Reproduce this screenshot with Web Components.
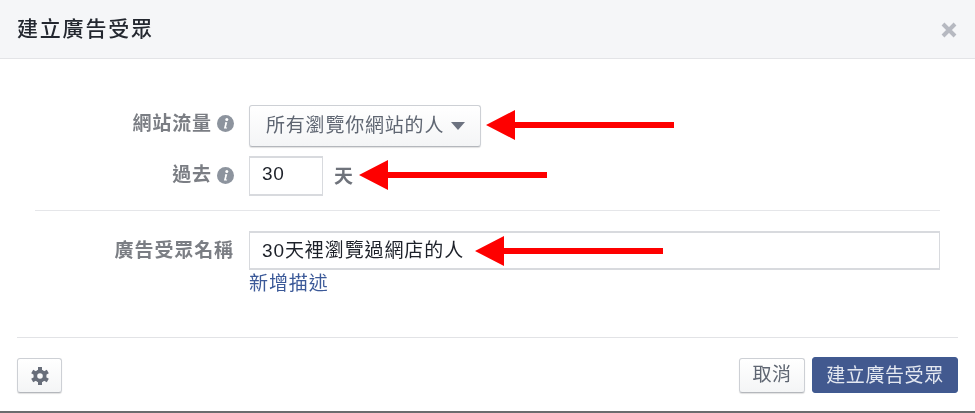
<!DOCTYPE html>
<html lang="zh-Hant">
<head>
<meta charset="utf-8">
<title>建立廣告受眾</title>
<style>
html, body { margin: 0; padding: 0; background: #fff; }
body { width: 975px; height: 413px; overflow: hidden; font-family: "Liberation Sans", "Noto Sans CJK TC", sans-serif; }
</style>
</head>
<body>
<fb-dialog>
  <fb-header slot="header">建立廣告受眾</fb-header>

  <fb-row label="網站流量" info lift="5">
    <fb-select>所有瀏覽你網站的人</fb-select>
  </fb-row>
  <fb-row label="過去" info lift="2">
    <fb-input width="74" height="40" spacing="0.6">30</fb-input>
    <fb-unit>天</fb-unit>
  </fb-row>
  <fb-divider></fb-divider>
  <fb-row label="廣告受眾名稱">
    <fb-input width="691" height="39" spacing="0.9">30天裡瀏覽過網店的人</fb-input>
  </fb-row>
  <fb-link>新增描述</fb-link>

  <fb-footer slot="footer"></fb-footer>

  <fb-arrow slot="overlay" tip="486" base="515" end="674" y="125"></fb-arrow>
  <fb-arrow slot="overlay" tip="359" base="388" end="547" y="175"></fb-arrow>
  <fb-arrow slot="overlay" tip="475" base="504" end="663" y="251"></fb-arrow>
</fb-dialog>

<script>
const CJK = `"Liberation Sans", "Noto Sans CJK TC", sans-serif`;

class FbDialog extends HTMLElement {
  constructor() {
    super();
    this.attachShadow({mode: "open"}).innerHTML = `
      <style>
        :host { display: flex; flex-direction: column; position: relative; width: 975px; height: 413px; box-sizing: border-box; border-bottom: 2px solid #6b6c6e; font-family: ${CJK}; background: #fff; filter: blur(.4px); }
        .body { flex: 1; padding-top: 46px; }
      </style>
      <slot name="header"></slot>
      <div class="body"><slot></slot></div>
      <slot name="footer"></slot>
      <slot name="overlay"></slot>`;
  }
}

class FbHeader extends HTMLElement {
  constructor() {
    super();
    this.attachShadow({mode: "open"}).innerHTML = `
      <style>
        :host { display: flex; align-items: center; justify-content: space-between; height: 58px; padding: 0 18px; background: #f5f6f8; border-bottom: 1px solid #e3e4e7; }
        .title { font-size: 21px; font-weight: 500; letter-spacing: 1.8px; color: #23272f; line-height: 60px; margin-left: -1px; }
        svg { display: block; margin-top: 2px; }
      </style>
      <span class="title"><slot></slot></span>
      <svg width="16" height="16" viewBox="0 0 16 16"><path d="M2 2 L14 14 M14 2 L2 14" stroke="#b6b9c1" stroke-width="4"/></svg>`;
  }
}

class FbRow extends HTMLElement {
  constructor() {
    super();
    const info = this.hasAttribute("info") ? `
      <svg width="17" height="17" viewBox="0 0 17 17">
        <circle cx="8.5" cy="8.5" r="8.5" fill="#8d949e"/>
        <circle cx="9.8" cy="4.4" r="1.5" fill="#fff"/>
        <path d="M8.1 7.2 H10.3 L8.9 12.4 H10.2 L9.9 13.6 H6.9 L8.2 8.4 H7.8 Z" fill="#fff"/>
      </svg>` : "";
    this.attachShadow({mode: "open"}).innerHTML = `
      <style>
        :host { display: grid; grid-template-columns: 234px 1fr; column-gap: 15px; align-items: center; margin-bottom: 9px; }
        .label { display: flex; justify-content: flex-end; align-items: center; gap: 5px; padding-bottom: ${this.getAttribute("lift") || 0}px; font-size: 19px; font-weight: 700; letter-spacing: 0.9px; color: #7b7e84; }
        .label span { padding-bottom: 5px; }
        .field { display: flex; align-items: center; }
      </style>
      <div class="label"><span>${this.getAttribute("label")}</span>${info}</div>
      <div class="field"><slot></slot></div>`;
  }
}

class FbSelect extends HTMLElement {
  constructor() {
    super();
    this.attachShadow({mode: "open"}).innerHTML = `
      <style>
        :host { display: flex; align-items: center; box-sizing: border-box; width: 232px; height: 42px; padding-left: 16px; border: 1px solid #cdd0d5; border-bottom-color: #b4b7bc; border-radius: 3px; background: linear-gradient(#fff, #f4f5f6); box-shadow: 0 1px 1px rgba(0,0,0,.12); font-size: 19px; letter-spacing: 0.8px; color: #5f6672; }
        span { padding-bottom: 6px; }
        i { width: 0; height: 0; margin-left: 7px; border: 7px solid transparent; border-top: 8px solid #6d7380; border-bottom: 0; }
      </style>
      <span><slot></slot></span><i></i>`;
  }
}

class FbInput extends HTMLElement {
  constructor() {
    super();
    this.attachShadow({mode: "open"}).innerHTML = `
      <style>
        :host { display: flex; align-items: center; box-sizing: border-box; width: ${this.getAttribute("width")}px; height: ${this.getAttribute("height")}px; padding: 0 0 4px 12px; border: 1px solid #d8dade; border-width: 2px 1px; background: #fff; font-size: 19px; letter-spacing: ${this.getAttribute("spacing") || 1}px; color: #1d2129; }
      </style>
      <slot></slot>`;
  }
}

class FbUnit extends HTMLElement {
  constructor() {
    super();
    this.attachShadow({mode: "open"}).innerHTML = `
      <style>:host { display: block; margin-left: 11px; padding-bottom: 4px; font-size: 19px; font-weight: 700; color: #6f737b; }</style>
      <slot></slot>`;
  }
}

class FbDivider extends HTMLElement {
  constructor() {
    super();
    this.attachShadow({mode: "open"}).innerHTML = `
      <style>:host { display: block; height: 1px; margin: 14px 35px 20px; background: #e5e6e9; }</style>`;
  }
}

class FbLink extends HTMLElement {
  constructor() {
    super();
    this.attachShadow({mode: "open"}).innerHTML = `
      <style>:host { display: block; margin: -6px 0 0 249px; line-height: 22px; font-size: 19px; letter-spacing: 0.9px; color: #3b5998; }</style>
      <slot></slot>`;
  }
}

class FbButton extends HTMLElement {
  constructor() {
    super();
    this.attachShadow({mode: "open"}).innerHTML = `
      <style>
        :host { display: flex; align-items: center; justify-content: center; box-sizing: border-box; height: 35px; padding-bottom: 6px; border: 1px solid #cdd0d5; border-bottom-color: #b4b7bc; border-radius: 3px; background: linear-gradient(#fff, #f4f5f6); box-shadow: 0 1px 1px rgba(0,0,0,.12); font-size: 19px; letter-spacing: 0.6px; color: #5f6672; }
        :host([primary]) { height: 36px; padding-bottom: 4px; border-color: #3f5a91; background: #42598f; color: #e4e8f1; box-shadow: none; }
      </style>
      <slot></slot>`;
  }
}

class FbFooter extends HTMLElement {
  constructor() {
    super();
    this.attachShadow({mode: "open"}).innerHTML = `
      <style>
        :host { display: flex; align-items: flex-end; gap: 7px; margin: 0 17px; height: 74px; box-sizing: border-box; padding-bottom: 18px; border-top: 1px solid #e2e3e6; }
        fb-button.gear { width: 45px; margin-right: auto; padding-bottom: 0; }
        fb-button.cancel { width: 66px; }
        fb-button.primary { width: 146px; }
        svg { display: block; }
      </style>
      <fb-button class="gear">
        <svg width="20" height="20" viewBox="0 0 20 20">
          <g fill="#686e7a">
            <path d="M8 1h4v5H8z"/>
            <path d="M8 1h4v5H8z" transform="rotate(60 10 10)"/>
            <path d="M8 1h4v5H8z" transform="rotate(120 10 10)"/>
            <path d="M8 1h4v5H8z" transform="rotate(180 10 10)"/>
            <path d="M8 1h4v5H8z" transform="rotate(240 10 10)"/>
            <path d="M8 1h4v5H8z" transform="rotate(300 10 10)"/>
            <path fill-rule="evenodd" d="M10 3.5a6.5 6.5 0 1 0 0 13a6.5 6.5 0 1 0 0-13zM10 7.2a2.8 2.8 0 1 1 0 5.6a2.8 2.8 0 1 1 0-5.6z"/>
          </g>
        </svg>
      </fb-button>
      <fb-button class="cancel">取消</fb-button>
      <fb-button class="primary" primary>建立廣告受眾</fb-button>`;
  }
}

// red annotation arrows lying over the dialog
class FbArrow extends HTMLElement {
  constructor() {
    super();
    const tip = +this.getAttribute("tip"), base = +this.getAttribute("base"), end = +this.getAttribute("end"), y = +this.getAttribute("y");
    const w = end - tip;
    this.attachShadow({mode: "open"}).innerHTML = `
      <style>:host { position: absolute; left: ${tip}px; top: ${y - 15}px; width: ${w}px; height: 30px; }
      svg { display: block; }</style>
      <svg width="${w}" height="30" viewBox="0 0 ${w} 30">
        <path d="M0 15 L${base - tip} 0 V12 H${w} V18 H${base - tip} V30 Z" fill="#fe0000"/>
      </svg>`;
  }
}

customElements.define("fb-dialog", FbDialog);
customElements.define("fb-header", FbHeader);
customElements.define("fb-row", FbRow);
customElements.define("fb-select", FbSelect);
customElements.define("fb-input", FbInput);
customElements.define("fb-unit", FbUnit);
customElements.define("fb-divider", FbDivider);
customElements.define("fb-link", FbLink);
customElements.define("fb-button", FbButton);
customElements.define("fb-footer", FbFooter);
customElements.define("fb-arrow", FbArrow);
</script>
</body>
</html>
